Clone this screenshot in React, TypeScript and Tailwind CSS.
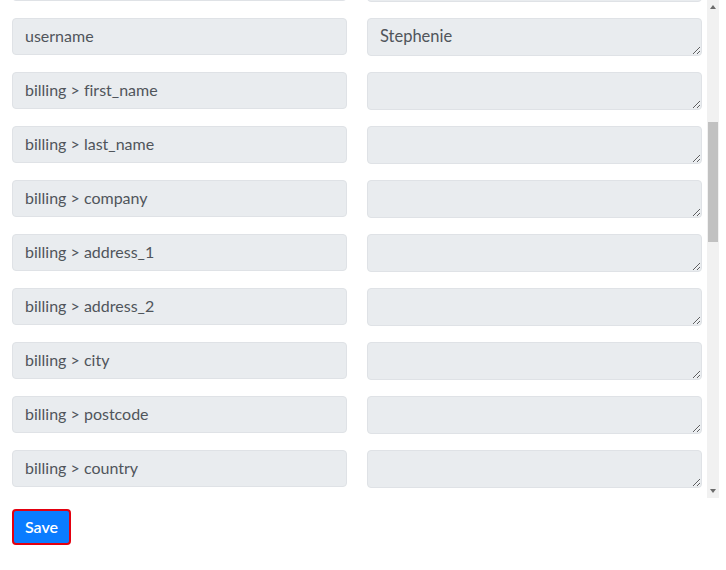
const fields: { label: string; value: string }[] = [
  { label: "email", value: "" },
  { label: "username", value: "Stephenie" },
  { label: "billing > first_name", value: "" },
  { label: "billing > last_name", value: "" },
  { label: "billing > company", value: "" },
  { label: "billing > address_1", value: "" },
  { label: "billing > address_2", value: "" },
  { label: "billing > city", value: "" },
  { label: "billing > postcode", value: "" },
  { label: "billing > country", value: "" },
];

function FieldRow({ label, value }: { label: string; value: string }) {
  return (
    <div className="flex items-start gap-5">
      <input
        readOnly
        value={label}
        className="h-[37px] w-[335px] shrink-0 rounded border border-[#dfe2e6] bg-[#e9ecef] px-3 pb-[2px] text-[16px] text-[#50555b] outline-none [font-variant-ligatures:none]"
      />
      <textarea
        readOnly
        defaultValue={value}
        className="h-[38px] w-[335px] shrink-0 resize-y rounded border border-[#dfe2e6] bg-[#e9ecef] px-3 pt-[5px] text-[16.5px] leading-6 text-[#50555b] outline-none"
      />
    </div>
  );
}

function Scrollbar() {
  return (
    <div className="flex h-full w-[12px] flex-col items-center bg-[#f1f1f1]">
      <div className="flex h-[12px] items-center justify-center">
        <span className="mt-[2px] h-0 w-0 border-x-[3px] border-b-[4px] border-x-transparent border-b-[#6b6b6b]" />
      </div>
      <div className="mt-[110px] h-[120px] w-[10px] bg-[#c1c1c1]" />
      <div className="flex-1" />
      <div className="flex h-[12px] items-center justify-center">
        <span className="mb-[2px] h-0 w-0 border-x-[3px] border-t-[4px] border-x-transparent border-t-[#6b6b6b]" />
      </div>
    </div>
  );
}

export default function App() {
  return (
    <div
      className="h-[570px] w-[726px] overflow-hidden bg-white"
      style={{ fontFamily: "Lato, 'Open Sans', sans-serif" }}
    >
      <div className="flex h-[498px] w-[719px]">
        <div className="flex-1 overflow-hidden">
          <div className="-mt-[36px] flex flex-col gap-4 pl-3">
            {fields.map((f) => (
              <FieldRow key={f.label} label={f.label} value={f.value} />
            ))}
          </div>
        </div>
        <Scrollbar />
      </div>
      <div className="pl-3 pt-[11px]">
        <button className="h-[36px] rounded-[4px] border-2 border-[#e3000f] bg-[#0a7cff] px-[11px] text-[16px] font-semibold text-white">
          Save
        </button>
      </div>
    </div>
  );
}
